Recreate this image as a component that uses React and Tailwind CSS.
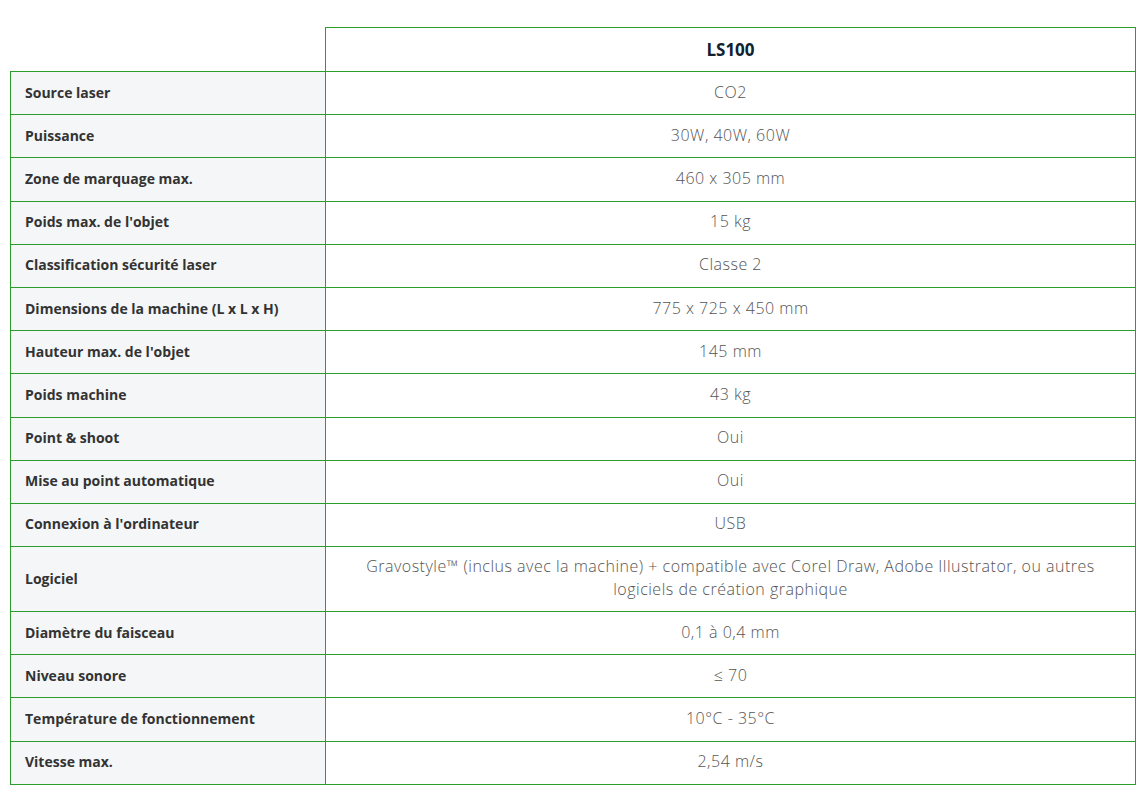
import React from 'react';

// Caractéristiques techniques de la LS100
const SPECS = [
  ['Source laser', 'CO2'],
  ['Puissance', '30W, 40W, 60W'],
  ['Zone de marquage max.', '460 x 305 mm'],
  ["Poids max. de l'objet", '15 kg'],
  ['Classification sécurité laser', 'Classe 2'],
  ['Dimensions de la machine (L x L x H)', '775 x 725 x 450 mm'],
  ["Hauteur max. de l'objet", '145 mm'],
  ['Poids machine', '43 kg'],
  ['Point & shoot', 'Oui'],
  ['Mise au point automatique', 'Oui'],
  ["Connexion à l'ordinateur", 'USB'],
  [
    'Logiciel',
    'Gravostyle™ (inclus avec la machine) + compatible avec Corel Draw, Adobe Illustrator, ou autres logiciels de création graphique',
  ],
  ['Diamètre du faisceau', '0,1 à 0,4 mm'],
  ['Niveau sonore', '≤ 70'],
  ['Température de fonctionnement', '10°C - 35°C'],
  ['Vitesse max.', '2,54 m/s'],
];

const App = () => {
  return (
    <div className="min-h-screen bg-white pt-[27px] pl-[10px] font-['Open_Sans',sans-serif]">
      <table className="border-collapse w-[1125px] table-fixed">
        <colgroup>
          <col className="w-[315px]" />
          <col className="w-[810px]" />
        </colgroup>
        <thead>
          <tr className="h-[44px]">
            <th className="p-0"></th>
            <th className="border border-[#2a9d2a] text-[17px] font-bold text-[#0f2231] text-center">LS100</th>
          </tr>
        </thead>
        <tbody>
          {SPECS.map(([label, value]) => (
            <tr key={label} className={label === 'Logiciel' ? 'h-[65px]' : 'h-[43.2px]'}>
              <td className="border border-[#2a9d2a] bg-[#f5f6f8] pl-[14px] pb-[2px] text-[14px] font-bold text-[#333]">
                {label}
              </td>
              <td className="border border-[#2a9d2a] px-[24px] pb-[2px] text-center text-[16px] font-light tracking-[0.5px] leading-[23px] text-[#555]">
                {value}
              </td>
            </tr>
          ))}
        </tbody>
      </table>
    </div>
  );
};

export default App;
